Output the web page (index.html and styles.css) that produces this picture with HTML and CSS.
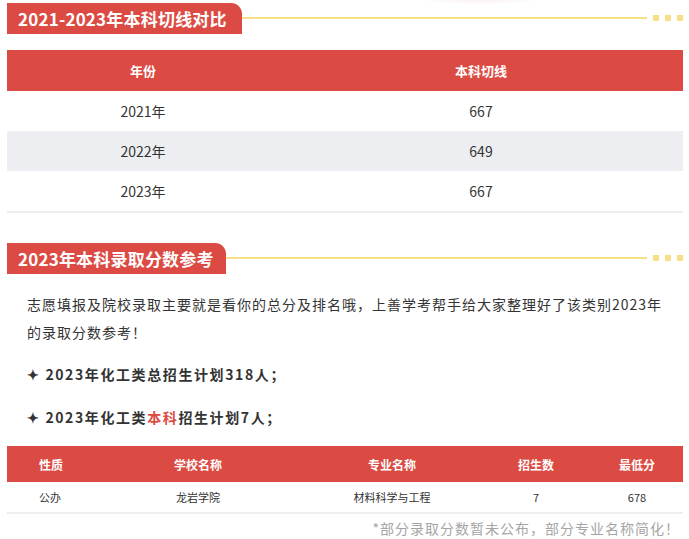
FILE: index.html
```html
<!DOCTYPE html>
<html lang="zh">
<head>
<meta charset="utf-8">
<link rel="stylesheet" href="styles.css">
</head>
<body>
<div class="page">
  <div class="sec-title">
    <div class="tab tab-a">2021-2023年本科切线对比</div>
    <div class="rule"></div>
    <div class="dots"><i></i><i></i><i></i></div>
  </div>
  <table class="t1">
    <thead><tr><th class="c1">年份</th><th>本科切线</th></tr></thead>
    <tbody>
      <tr><td>2021年</td><td>667</td></tr>
      <tr class="alt"><td>2022年</td><td>649</td></tr>
      <tr><td>2023年</td><td>667</td></tr>
    </tbody>
  </table>

  <div class="sec-title second">
    <div class="tab">2023年本科录取分数参考</div>
    <div class="rule"></div>
    <div class="dots"><i></i><i></i><i></i></div>
  </div>
  <p class="intro">志愿填报及院校录取主要就是看你的总分及排名哦，上善学考帮手给大家整理好了该类别2023年的录取分数参考！</p>
  <p class="bullet">✦ 2023年化工类总招生计划318人；</p>
  <p class="bullet">✦ 2023年化工类<span class="red">本科</span>招生计划7人；</p>

  <table class="t2">
    <thead><tr><th class="k1">性质</th><th class="k2">学校名称</th><th class="k3">专业名称</th><th class="k4">招生数</th><th class="k5">最低分</th></tr></thead>
    <tbody><tr><td>公办</td><td>龙岩学院</td><td>材料科学与工程</td><td>7</td><td>678</td></tr></tbody>
  </table>
  <p class="note">*部分录取分数暂未公布，部分专业名称简化！</p>
</div>
</body>
</html>
```

FILE: styles.css
```css
html, body { margin: 0; padding: 0; background: #fff; }
body {
  font-family: "Noto Sans CJK SC", "Noto Sans", sans-serif;
  color: #333;
  background: radial-gradient(ellipse 60px 4px at 480px 0px, rgba(225,190,180,0.22), rgba(255,255,255,0) 100%) no-repeat, #fff;
}
.page { padding: 3px 6px 0 7px; }

.sec-title { display: flex; align-items: center; height: 31px; }
.sec-title.second { margin-top: 30px; }
.tab {
  background: #dc4b43;
  color: #fff;
  font-weight: 700;
  font-size: 17px;
  line-height: 31px;
  height: 31px;
  padding: 0 12px 0 11px;
  border-top-right-radius: 11px;
  white-space: nowrap;
  letter-spacing: 0.2px;
}
.tab-a { padding-right: 15px; }
.rule { flex: 1; height: 2px; background: #f7df86; margin-top: -1px; }
.dots { display: flex; gap: 6px; margin-left: 6px; margin-top: -1px; }
.dots i { display: block; width: 6px; height: 6px; background: #f7df86; }

table { border-collapse: collapse; width: 100%; table-layout: fixed; }
.t1 { margin-top: 16px; border-bottom: 2px solid #eceef1; }
.t1 th {
  background: #dc4b43; color: #fff; font-weight: 700; font-size: 13px;
  height: 41px; padding: 0; text-align: center;
}
.t1 th.c1 { width: 272px; }
.t1 td { height: 40px; padding: 0; text-align: center; font-size: 14px; color: #333; }
.t1 tr.alt td { background: #eceef1; }

.intro {
  margin: 16px 0 0; padding: 0 12px 0 20px;
  font-size: 14px; line-height: 28px; letter-spacing: 1px; color: #333;
}
.bullet {
  margin: 14px 0 0; padding-left: 20px;
  font-size: 14px; font-weight: 700; line-height: 28px; letter-spacing: 1.6px; color: #333;
}
.bullet + .bullet { margin-top: 15px; }
.red { color: #dc4b43; }

.t2 { margin-top: 15px; border-bottom: 2px solid #eceef1; }
.t2 th {
  background: #dc4b43; color: #fff; font-weight: 700; font-size: 12px;
  height: 36px; padding: 0; text-align: center;
}
.t2 td { height: 30px; padding: 0; text-align: center; font-size: 11px; color: #333; }
.t2 .k1 { width: 54px; }
.t2 .k2 { width: 210px; }
.t2 .k3 { width: 178px; }
.t2 .k4 { width: 110px; }
.t2 th.k1, .t2 td:first-child { text-align: left; padding-left: 32px; }

.note {
  margin: 2px 0 0; text-align: right; padding-right: 3px;
  font-size: 14px; color: #a5a5a5; letter-spacing: 1px; line-height: 24px;
}
```
